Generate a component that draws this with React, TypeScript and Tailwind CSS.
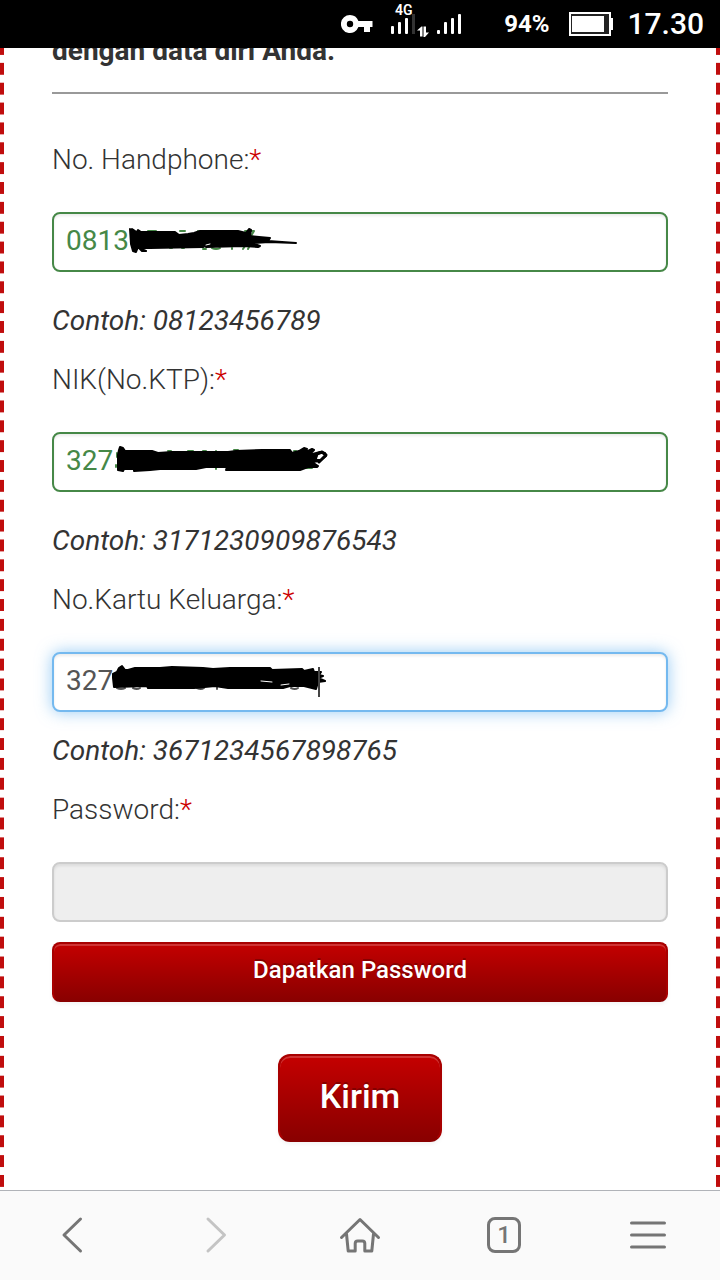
import type { ReactNode } from "react";

function StatusBar() {
  return (
    <header className="relative z-10 flex h-12 shrink-0 items-center justify-end bg-black pr-4 text-white">
      <svg width="32" height="20" viewBox="0 0 32 20" fill="white" aria-hidden="true">
        <path
          fillRule="evenodd"
          d="M9 1a9 9 0 1 0 8.400 12H23v5h6v-5h2.500V7H17.400A9 9 0 0 0 9 1Zm0 5.800a3.200 3.200 0 1 1 0 6.400a3.200 3.200 0 0 1 0-6.400Z"
        />
      </svg>
      <svg className="ml-[17px]" width="74" height="48" viewBox="0 0 74 48" fill="white" aria-hidden="true">
        <text x="5" y="15" fontFamily="Roboto, sans-serif" fontWeight="600" fontSize="14">4G</text>
        <rect x="1" y="26" width="3" height="8" rx="1" />
        <rect x="8" y="22" width="3" height="12" rx="1" />
        <rect x="15" y="18" width="3" height="16" rx="1" />
        <rect x="22" y="14" width="3" height="20" fill="#333" />
        <path d="M27 30.500L31.500 26.500h1v10h-2.500v-6H27ZM33.500 26.500H36v6H39L35 37h-1.500Z" />
        <rect x="47" y="30" width="3" height="4" rx="1" />
        <rect x="54" y="22" width="3" height="12" rx="1" />
        <rect x="61" y="18" width="3" height="16" rx="1" />
        <rect x="68" y="14" width="3" height="20" rx="1" />
      </svg>
      <span className="ml-10 text-2xl leading-12 font-bold">94%</span>
      <svg className="ml-5" width="44" height="24" viewBox="0 0 44 24" aria-hidden="true">
        <rect x="1" y="1" width="40" height="22" fill="#222" stroke="#fff" strokeWidth="2" />
        <rect x="3" y="4" width="32" height="16" fill="#fff" />
        <rect x="41" y="6" width="3" height="12" fill="#fff" />
      </svg>
      <span className="ml-[14px] text-[30px] leading-12 font-medium">17.30</span>
    </header>
  );
}

const tones = {
  valid: "border-[#468847] text-[#468847] bg-white shadow-[inset_0_2px_3px_rgba(0,0,0,0.08)]",
  active:
    "border-[#74b9ef] text-[#555555] bg-white shadow-[inset_0_2px_3px_rgba(0,0,0,0.08),0_0_16px_rgba(82,168,236,0.6)]",
  disabled: "border-[#cccccc] text-[#555555] bg-[#eeeeee] shadow-[inset_0_2px_3px_rgba(0,0,0,0.08)]",
};

type FieldProps = {
  id: string;
  label: string;
  tone: keyof typeof tones;
  type?: string;
  value?: string;
  children?: ReactNode;
};

function Field({ id, label, tone, type = "text", value = "", children }: FieldProps) {
  return (
    <div className="flex flex-col">
      <label htmlFor={id} className="text-[28px] leading-10 font-light text-[#333333]">
        {label}
        <span className="text-[#cc0000]">*</span>
      </label>
      <div className="relative mt-8">
        <input
          id={id}
          type={type}
          defaultValue={value}
          disabled={tone === "disabled"}
          className={`block h-[60px] w-full rounded-lg border-2 px-3 pb-1 text-[28px] outline-none ${tones[tone]}`}
        />
        {children}
      </div>
    </div>
  );
}

function Scribble({ viewBox, children }: { viewBox: string; children: ReactNode }) {
  return (
    <svg
      className="pointer-events-none absolute top-0 left-0"
      width="300"
      height="60"
      viewBox={viewBox}
      fill="#000"
      stroke="#000"
      strokeWidth="2"
      strokeLinejoin="round"
      strokeLinecap="round"
      aria-hidden="true"
    >
      {children}
    </svg>
  );
}

function Hint({ children }: { children: ReactNode }) {
  return <p className="text-[28px] leading-10 text-[#333333] italic">{children}</p>;
}

const redButton =
  "border-2 border-[#a80000] border-b-[#8a0000] bg-linear-to-b from-[#c60000] to-[#880000] bg-origin-border font-medium text-white [text-shadow:0_-2px_0_rgba(0,0,0,0.25)] shadow-[inset_0_2px_0_rgba(255,255,255,0.2),0_2px_4px_rgba(0,0,0,0.05)]";

function BrowserBar() {
  const button = "flex h-full items-center justify-center pb-0.5";
  const stroke = {
    fill: "none",
    stroke: "currentColor",
    strokeWidth: 3,
    strokeLinecap: "round" as const,
    strokeLinejoin: "round" as const,
  };
  return (
    <nav className="relative z-10 grid h-[90px] shrink-0 grid-cols-5 border-t border-[#b0b3b8] bg-[#fafafa] text-[#757575]">
      <button type="button" aria-label="Back" className={button}>
        <svg width="40" height="40" viewBox="0 0 40 40" {...stroke}>
          <path d="M28.500 4L12 20l16.500 16" />
        </svg>
      </button>
      <button type="button" aria-label="Forward" className={`${button} text-[#c4c4c4]`}>
        <svg width="40" height="40" viewBox="0 0 40 40" {...stroke}>
          <path d="M12 4l16.500 16L12 36" />
        </svg>
      </button>
      <button type="button" aria-label="Home" className={button}>
        <svg width="42" height="40" viewBox="0 0 42 40" {...stroke}>
          <path d="M2.500 22.500L21 4.500l18.500 18M7.500 19l1.700 17h7V28.500q0-2.500 2.500-2.500h4.600q2.500 0 2.500 2.500V36h7l1.700-17" />
        </svg>
      </button>
      <button type="button" aria-label="Tabs" className={button}>
        <span className="flex h-9 w-[34px] items-center justify-center rounded-lg border-3 border-[#757575] text-2xl font-medium">
          1
        </span>
      </button>
      <button type="button" aria-label="Menu" className={button}>
        <svg width="40" height="40" viewBox="0 0 40 40" {...stroke}>
          <path d="M3.500 8h33M3.500 20h33M3.500 32h33" />
        </svg>
      </button>
    </nav>
  );
}

export default function App() {
  return (
    <div className="flex min-h-screen flex-col bg-white font-[Roboto,sans-serif]">
      <StatusBar />
      <main className="flex flex-1 flex-col overflow-hidden">
        <form
          onSubmit={(e) => e.preventDefault()}
          className="-my-[5px] flex flex-1 flex-col bg-[linear-gradient(#c00d0d_60%,transparent_60%),linear-gradient(#c00d0d_60%,transparent_60%)] bg-[position:left_top,right_top] bg-size-[4px_20px] [background-repeat:no-repeat_round] px-[52px] pb-[53px]"
        >
          <p className="-mt-3 text-[28px] leading-10 font-bold text-[#333333]">dengan data diri Anda.</p>
          <hr className="mt-[21px] mb-[46px] border-t-2 border-[#999999]" />

          <Field id="phone" label="No. Handphone:" tone="valid" value="0813">
            <Scribble viewBox="52 212 300 60">
              <path
                d="M148 231h8M180 231h5M198 231v2M245 231h9l-3 5M170 248h2M182 248h2M203 249h3M212 248q4 2 8 0M232 248v1M243 249l2-3M248 249l3-6"
                fill="none"
                stroke="#468847"
              />
              <path d="M130 229L132 235L132 229L135 231L136 233L138 230L141 232L175 232L179 235L188 234L194 233L200 231L238 231L246 233L249 229L251 230L250 236L259 237L270 238L268 241L296 243L269 242L252 243L260 246L258 247L244 246L206 247L207 245L203 247L150 248L139 248L146 251L142 251L138 247L136 252L133 251L131 244Z" />
              <path d="M206 245l4-1" stroke="#fff" strokeWidth="1" />
            </Scribble>
          </Field>
          <div className="mt-[29px] mb-[19px]">
            <Hint>Contoh: 08123456789</Hint>
          </div>

          <Field id="nik" label="NIK(No.KTP):" tone="valid" value="327">
            <Scribble viewBox="52 432 300 60">
              <path
                d="M117 453v4M116 465v2M168 451h3M188 451h5M203 451h3M216 451v2M234 450h4M294 451h2M216 466v3M306 468h6"
                fill="none"
                stroke="#468847"
              />
              <path d="M119 450L120 447L123 448L125 451L152 451L158 453L172 452L228 452L236 451L262 450L290 450L292 453L299 451L304 448L307 449L304 453L312 449L314 450L309 455L320 452L325 453L326 456L320 461L312 462L318 466L317 467L308 467L300 470L226 470L227 467L206 467L196 469L160 469L150 470L134 471L134 469L124 469L123 471L118 470L118 455Z" />
              <path d="M317 459l1-4l3-2l3 2l-2 4Z" fill="#fff" stroke="none" />
              <path d="M314 460l3-6l5-2l4 3l-7 7" fill="none" strokeWidth="3" />
            </Scribble>
          </Field>
          <div className="mt-[29px] mb-[19px]">
            <Hint>Contoh: 3171230909876543</Hint>
          </div>

          <Field id="kk" label="No.Kartu Keluarga:" tone="active" value="327">
            <Scribble viewBox="52 652 300 60">
              <path d="M117 688q4 2 8 0M133 688q4 2 7 0M197 688q4 2 7 0M217 687v2M291 688q4 2 7 0" fill="none" stroke="#555555" />
              <path d="M113 674L117 672L119 668L122 666L125 670L128 670L135 668L160 668L172 667L203 668L213 669L230 668L270 668L272 670L302 669L304 671L313 669L314 672L321 672L319 675L323 676L318 678L325 681L318 682L316 689L304 686L290 686L283 688L228 688L215 686L194 688L148 688L147 686L114 687L113 678Z" />
              <path d="M261 681l11 1M281 685l8-1" stroke="#fff" strokeWidth="1" />
              <path d="M319 667v30" stroke="#444444" strokeLinecap="butt" />
            </Scribble>
          </Field>
          <div className="mt-[19px] mb-[19px]">
            <Hint>Contoh: 3671234567898765</Hint>
          </div>

          <Field id="password" label="Password:" tone="disabled" type="password" />
          <button type="button" className={`mt-5 h-[60px] w-full rounded-lg pb-1 text-2xl ${redButton}`}>
            Dapatkan Password
          </button>
          <button type="submit" className={`mt-[52px] h-[88px] self-center rounded-xl px-10 pb-1 text-[34px] ${redButton}`}>
            Kirim
          </button>
        </form>
      </main>
      <BrowserBar />
    </div>
  );
}
